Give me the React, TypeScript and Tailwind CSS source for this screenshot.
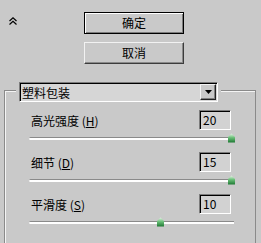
import React from "react";

const font = { fontFamily: '"Noto Sans CJK SC", "Liberation Sans", sans-serif' };

type Row = { label: string; key: string; value: string; thumb: number };

const rows: Row[] = [
  { label: "高光强度", key: "H", value: "20", thumb: 198 },
  { label: "细节", key: "D", value: "15", thumb: 198 },
  { label: "平滑度", key: "S", value: "10", thumb: 127 },
];

export default function App() {
  return (
    <div
      className="h-[243px] w-[261px] overflow-hidden bg-[#c9c9c9] text-[12px] leading-none text-black"
      style={font}
    >
      <div className="flex pt-[12px]">
        <div className="w-[84px] pl-[9px] pt-[5px]">
          <svg width="8" height="8" viewBox="0 0 8 8" fill="none" stroke="#000" strokeWidth="1.2">
            <path d="M0.5 4 L4 0.8 L7.5 4" />
            <path d="M0.5 7.5 L4 4.3 L7.5 7.5" />
          </svg>
        </div>
        <div className="flex flex-col gap-[8px]">
          <button className="flex h-[22px] w-[100px] items-center justify-center border border-black bg-[#c9c9c9] shadow-[inset_1px_1px_0_#fff,inset_-1px_-1px_0_#7c7c7c]">
            确定
          </button>
          <button className="flex h-[22px] w-[100px] items-center justify-center border-t border-l border-t-[#f2f2f2] border-l-[#f2f2f2] border-b border-r border-b-[#3c3c3c] border-r-[#3c3c3c] bg-[#c9c9c9] shadow-[inset_-1px_-1px_0_#8a8a8a]">
            取消
          </button>
        </div>
      </div>

      <div className="relative z-10 ml-[16px] mt-[18px] w-fit bg-[#c9c9c9] px-[3px]">
        <Dropdown />
      </div>

      <div className="-mt-[12px] ml-[4px] h-[170px] w-[252px] border border-[#8a8a8a] pl-[24px] pr-[21px] pt-[19px] shadow-[inset_1px_1px_0_#f4f4f4]">
        <div className="flex flex-col gap-[8px]">
          {rows.map((r) => (
            <SliderRow key={r.key} row={r} />
          ))}
        </div>
      </div>
    </div>
  );
}

function Dropdown() {
  return (
    <div className="flex h-[20px] w-[199px] items-center border-t border-l border-t-[#7c7c7c] border-l-[#7c7c7c] border-b border-r border-b-white border-r-white bg-[#d6d6d6] shadow-[inset_1px_1px_0_#000]">
      <span className="flex-1 pl-[2px] pt-[1px]">塑料包装</span>
      <div className="mr-[1px] flex h-[16px] w-[16px] items-center justify-center border-t border-l border-t-[#f2f2f2] border-l-[#f2f2f2] border-b border-r border-b-[#222] border-r-[#222] bg-[#c9c9c9] shadow-[inset_-1px_-1px_0_#808080]">
        <svg width="7" height="4" viewBox="0 0 7 4">
          <path d="M0 0 H7 L3.5 4 Z" fill="#000" />
        </svg>
      </div>
    </div>
  );
}

function SliderRow({ row }: { row: Row }) {
  return (
    <div>
      <div className="flex h-[20px] items-center justify-between">
        <span className="pl-[2px] pt-[1px]">
          {row.label} (<u>{row.key}</u>)
        </span>
        <div className="mr-[3px] flex h-[20px] w-[32px] items-center border-t border-l border-t-[#7c7c7c] border-l-[#7c7c7c] border-b border-r border-b-white border-r-white bg-[#d2d2d2] pl-[3px] shadow-[inset_1px_1px_0_#000]">
          {row.value}
        </div>
      </div>
      <div className="relative h-[14px] pt-[7px]">
        <div className="h-[3px] rounded-l-full border-t border-[#8a8a8a] bg-white" />
        <svg
          className="absolute top-[3px]"
          style={{ left: row.thumb }}
          width="9"
          height="10"
          viewBox="0 0 9 10"
        >
          <defs>
            <linearGradient id={`g${row.key}`} x1="0" y1="0" x2="0" y2="1">
              <stop offset="0" stopColor="#e8f6e8" />
              <stop offset="0.45" stopColor="#6cc07a" />
              <stop offset="1" stopColor="#1f7a34" />
            </linearGradient>
          </defs>
          <path d="M4.5 0.5 L8 4 L8 9.5 L1 9.5 L1 4 Z" fill={`url(#g${row.key})`} />
        </svg>
      </div>
    </div>
  );
}
